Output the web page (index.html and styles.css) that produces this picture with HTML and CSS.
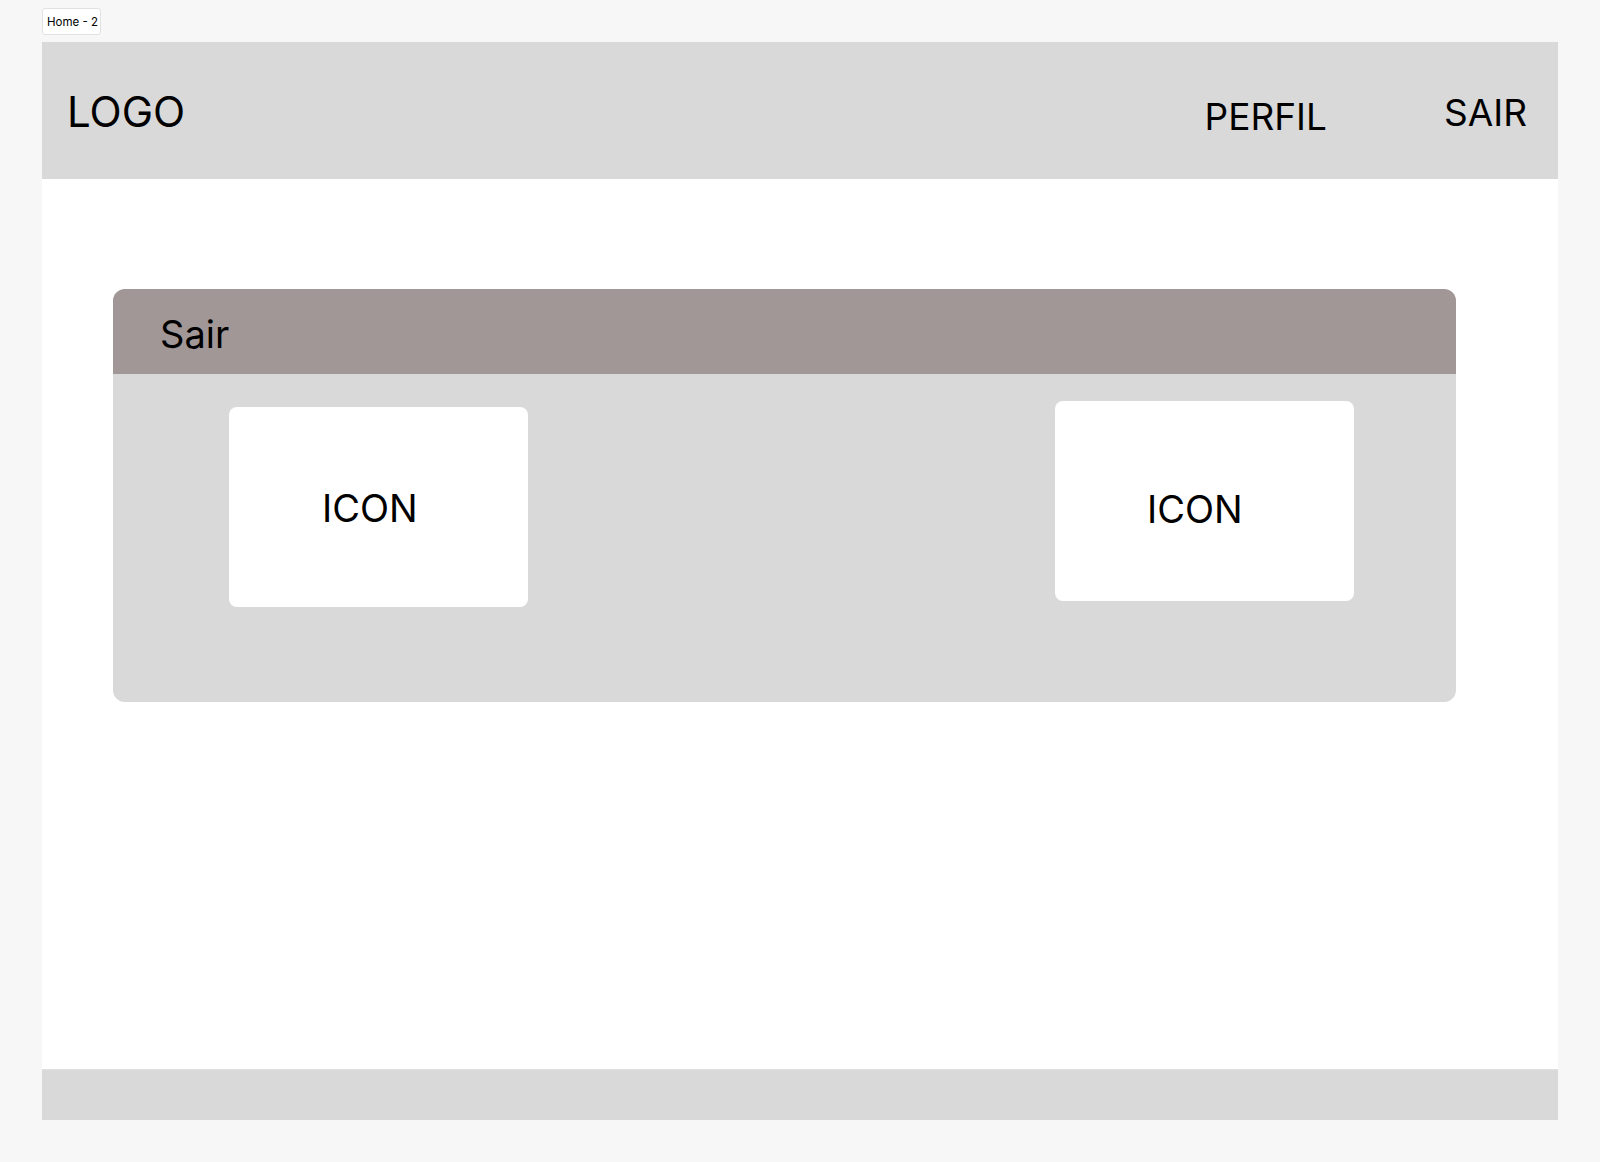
FILE: index.html
```html
<!DOCTYPE html>
<html lang="pt">
<head>
<meta charset="utf-8">
<title>Home - 2</title>
<link rel="stylesheet" href="styles.css">
</head>
<body>
<div class="canvas">
  <div class="frame-label">Home - 2</div>
  <div class="frame">
    <header class="topbar">
      <div class="logo">LOGO</div>
      <nav class="nav">
        <span class="nav-perfil">PERFIL</span>
        <span class="nav-sair">SAIR</span>
      </nav>
    </header>
    <main class="main">
      <section class="card">
        <div class="card-head"><span class="card-title">Sair</span></div>
        <div class="card-body">
          <div class="tile tile-a"><span class="tile-text">ICON</span></div>
          <div class="tile tile-b"><span class="tile-text">ICON</span></div>
        </div>
      </section>
    </main>
    <footer class="footer"></footer>
  </div>
</div>
</body>
</html>
```
FILE: styles.css
```css
html, body {
  margin: 0;
  padding: 0;
  background: #f7f7f7;
  font-family: Inter, "Liberation Sans", sans-serif;
  color: #000;
}
.canvas {
  padding: 8px 0 0 42px;
  height: 1162px;
  box-sizing: border-box;
}
.frame-label {
  display: flex;
  align-items: center;
  height: 27px;
  box-sizing: border-box;
  padding: 0 0 0 4px;
  font-size: 11.5px;
  background: #fff;
  border: 1px solid #e2e2e2;
  border-radius: 3px;
  width: 59px;
  white-space: nowrap;
}
.frame {
  margin-top: 7px;
  width: 1516px;
  height: 1078px;
  background: #fff;
  display: flex;
  flex-direction: column;
}
.topbar {
  height: 137px;
  background: #d9d9d9;
  display: flex;
  align-items: flex-start;
  padding: 0 31px 0 25px;
  flex-shrink: 0;
}
.logo {
  font-size: 42px;
  line-height: 1;
  margin-top: 49px;
}
.nav {
  margin-left: auto;
  display: flex;
  align-items: flex-start;
  gap: 117px;
}
.nav-perfil, .nav-sair {
  font-size: 37px;
  line-height: 1;
}
.nav-perfil { margin-top: 56px; }
.nav-sair { margin-top: 52px; }
.main {
  flex: 1;
  padding: 110px 0 0 71px;
}
.card {
  width: 1343px;
  height: 413px;
  border-radius: 12px;
  overflow: hidden;
  background: #d9d9d9;
  display: flex;
  flex-direction: column;
}
.card-head {
  height: 85px;
  background: #a19797;
  padding: 26px 0 0 47px;
  box-sizing: border-box;
  flex-shrink: 0;
}
.card-title {
  font-size: 38px;
  line-height: 1;
}
.card-body {
  flex: 1;
  display: flex;
  justify-content: space-between;
  align-items: flex-start;
  padding: 0 102px 0 116px;
}
.tile {
  width: 299px;
  height: 200px;
  background: #fff;
  border-radius: 8px;
  box-sizing: border-box;
}
.tile-a { margin-top: 33px; padding: 82px 0 0 93px; }
.tile-b { margin-top: 27px; padding: 89px 0 0 92px; }
.tile-text {
  font-size: 38px;
  line-height: 1;
  display: block;
}
.footer {
  height: 51px;
  background: #d9d9d9;
  border-top: 1px solid #e0e0e0;
  box-sizing: border-box;
  flex-shrink: 0;
}
```
